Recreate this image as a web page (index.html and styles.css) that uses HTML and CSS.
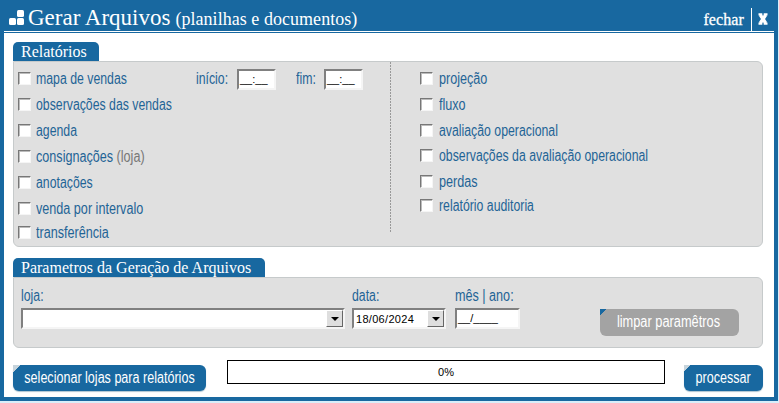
FILE: index.html
```html
<!DOCTYPE html>
<html lang="pt-BR">
<head>
<meta charset="utf-8">
<title>Gerar Arquivos</title>
<link rel="stylesheet" href="styles.css">
</head>
<body>
<main class="window">
  <header class="titlebar">
    <svg class="logo" width="15" height="16" viewBox="0 0 15 16"><g fill="#fff"><rect x="8" y="0" width="7" height="7" rx="1.5"/><rect x="0" y="8" width="7" height="7" rx="1.5"/><rect x="8" y="8" width="7" height="7" rx="1.5"/></g></svg>
    <h1 class="title">Gerar Arquivos</h1>
    <span class="subtitle">(planilhas e documentos)</span>
    <span class="close-label">fechar</span>
    <span class="close-rule"></span>
    <svg class="close-icon" width="10" height="12" viewBox="0 0 10 12"><path d="M2.3 1.8 7.7 10.2M7.7 1.8 2.3 10.2" stroke="#fff" stroke-width="3.4"/><path d="M.5 1.3h3.8M5.7 1.3h3.8M.5 10.7h3.8M5.7 10.7h3.8" stroke="#fff" stroke-width="2.2"/></svg>
  </header>
  <div class="content">
    <h2 class="tab tab-reports">Relatórios</h2>
    <section class="panel reports">
      <div class="column left">
        <div class="row"><i class="check"></i><span class="label first">mapa de vendas</span>
          <span class="label start">início:</span><span class="field time">__:__</span>
          <span class="label end">fim:</span><span class="field time">__:__</span></div>
        <div class="row"><i class="check"></i><span class="label">observações das vendas</span></div>
        <div class="row"><i class="check"></i><span class="label">agenda</span></div>
        <div class="row"><i class="check"></i><span class="label wide">consignações <span class="muted">(loja)</span></span></div>
        <div class="row"><i class="check"></i><span class="label">anotações</span></div>
        <div class="row"><i class="check"></i><span class="label wide">venda por intervalo</span></div>
        <div class="row short"><i class="check"></i><span class="label wide">transferência</span></div>
      </div>
      <div class="column right">
        <div class="row"><i class="check"></i><span class="label wide">projeção</span></div>
        <div class="row"><i class="check"></i><span class="label wide">fluxo</span></div>
        <div class="row"><i class="check"></i><span class="label">avaliação operacional</span></div>
        <div class="row tight"><i class="check"></i><span class="label">observações da avaliação operacional</span></div>
        <div class="row"><i class="check"></i><span class="label wide">perdas</span></div>
        <div class="row short"><i class="check"></i><span class="label">relatório auditoria</span></div>
      </div>
    </section>
    <h2 class="tab tab-params">Parametros da Geração de Arquivos</h2>
    <section class="panel params">
      <div class="group store"><span class="label">loja:</span><div class="field combo"><span></span><b class="arrow"></b></div></div>
      <div class="group date"><span class="label">data:</span><div class="field combo"><span class="value">18/06/2024</span><b class="arrow"></b></div></div>
      <div class="group month"><span class="label wide">mês | ano:</span><div class="field">__/____</div></div>
      <button class="button clear"><span>limpar paramêtros</span></button>
    </section>
    <footer class="actions">
      <button class="button select"><span>selecionar lojas para relatórios</span></button>
      <div class="progress">0%</div>
      <button class="button process"><span>processar</span></button>
    </footer>
  </div>
</main>
</body>
</html>
```
FILE: styles.css
```css
* { box-sizing: border-box; }
body { margin: 0; background: #d9eefa; overflow: hidden; }
h1, h2 { margin: 0; font-weight: normal; }
.window { width: 778px; height: 401px; background: #1868a0; padding: 0 4px 4px; font-family: "Liberation Sans", sans-serif; }
.titlebar { height: 33px; display: flex; align-items: flex-start; color: #fff; font-family: "Liberation Serif", serif; background: linear-gradient(#fff, #fff) 0 31px / 100% 1px no-repeat; }
.logo { margin: 10px 0 0 5px; }
.title { margin: 5px 0 0 4px; font-size: 23px; line-height: 26px; white-space: nowrap; }
.subtitle { margin: 9px 0 0 5px; font-size: 18px; line-height: 20px; letter-spacing: .04px; }
.close-label { margin: 10px 7px 0 auto; font-size: 16px; line-height: 20px; letter-spacing: .1px; -webkit-text-stroke: .3px #fff; }
.close-rule { width: 1px; height: 23px; margin-top: 8px; background: #fff; }
.close-icon { margin: 13px 6px 0 6px; }
.content { height: 364px; padding: 9px 11px 0 9px; background: #fff; }
.tab { height: 19px; padding-left: 8px; border-radius: 5px 5px 0 0; background: #1868a0; color: #fff; font-family: "Liberation Serif", serif; font-size: 16px; line-height: 20px; white-space: nowrap; }
.tab-reports { width: 86px; }
.tab-params { width: 252px; margin-top: 11px; }
.panel { width: 750px; background: #e0e0e0; border: 1px solid #c6cacb; border-radius: 0 6px 6px 6px; display: flex; }
.reports { height: 186px; }
.column { padding-top: 3px; }
.left { width: 377px; padding-left: 4px; background: repeating-linear-gradient(#999 0 2px, transparent 2px 3px) right top / 1px 171px no-repeat; }
.right { padding-left: 29px; }
.row { height: 26px; display: flex; align-items: center; }
.row.tight { height: 25px; }
.row.short { height: 23px; }
.check { flex: none; width: 13px; height: 13px; background: #fff; border: 1px solid; border-color: #777 #f5f5f5 #f5f5f5 #777; box-shadow: inset 1px 1px #bbb; }
.label { margin-left: 6px; color: #1f6496; font-size: 16px; line-height: 18px; white-space: nowrap; transform: scaleX(.768); transform-origin: left; }
.label.wide { transform: scaleX(.788); }
.left .label { margin-left: 5px; }
.muted { color: #777; }
.row .label { padding-top: 1px; }
.left .first { width: 91px; }
.left .start { width: 33px; margin-left: 69px; }
.left .end { width: 21px; margin-left: 20px; }
.field { background: #fff; border: 2px solid; border-color: #808080 #f5f5f5 #f5f5f5 #808080; color: #000; font: 11px/16px "Liberation Sans", sans-serif; }
.time { flex: none; width: 39px; height: 21px; margin: 2px 0 0 8px; padding-left: 1px; }
.end + .time { margin-left: 7px; }
.group { padding-top: 9px; }
.group .label { display: block; margin-left: 0; height: 21px; }
.group .field { height: 21px; padding-left: 1px; }
.store { margin-left: 7px; width: 324px; }
.date { margin-left: 7px; width: 94px; }
.month { margin-left: 9px; width: 65px; }
.params { height: 71px; }
.combo { display: flex; justify-content: space-between; }
.value { padding-left: 2px; line-height: 18px; letter-spacing: .3px; }
.group .combo { padding-left: 0; }
.arrow { width: 17px; height: 17px; background: #dedede; border: 1px solid; border-color: #fff #666 #666 #fff; display: flex; align-items: center; justify-content: center; }
.arrow::after { content: ""; border: 4px solid transparent; border-top-color: #000; border-bottom: 0; }
.button { position: relative; display: flex; justify-content: center; border: 0; padding: 0; border-radius: 6px; color: #fff; background: #1868a0; font: 16px/26px "Liberation Sans", sans-serif; white-space: nowrap; box-shadow: 0 1px 1px #adc4d1; }
.button span { flex: none; transform: scaleX(.785); }
.button::before { content: ""; position: absolute; left: 0; top: 0; width: 7px; height: 7px; background: linear-gradient(135deg, #c7d4dc 50%, transparent 50%); }
.clear { width: 139px; height: 27px; margin: 31px 0 0 80px; background: #a3a3a3; box-shadow: none; }
.clear::before { background: linear-gradient(135deg, #1868a0 50%, transparent 50%); }
.clear span { transform: translateX(-1px) scaleX(.8); }
.actions { display: flex; padding-top: 12px; }
.select { width: 193px; height: 26px; margin-top: 5px; }
.progress { width: 438px; height: 24px; margin-left: 21px; border: 1px solid #000; text-align: center; font: 11px/22px "Liberation Sans", sans-serif; }
.process { width: 79px; height: 26px; margin: 5px 0 0 19px; }
```
